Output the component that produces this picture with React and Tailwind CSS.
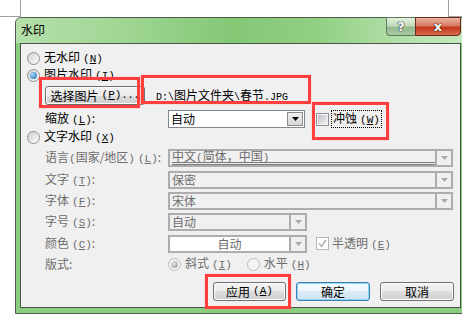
import React from 'react';

// small helpers for the Win7-style controls
function Acc({ k }) {
  return (
    <span className="ml-[3px] font-['Liberation_Mono',monospace] text-[11px]">
      (<span className="underline">{k}</span>)
    </span>
  );
}

function M({ children }) {
  return <span className="font-['Liberation_Mono',monospace] text-[10px]">{children}</span>;
}

function Radio({ checked, disabled }) {
  return (
    <span
      className={`flex h-[13px] w-[13px] shrink-0 items-center justify-center rounded-full border ${
        disabled ? 'border-[#bcbcbc] bg-[#f4f4f4]' : 'border-[#8e8f8f] bg-[linear-gradient(135deg,#cfcfcf,#fdfdfd)]'
      }`}
    >
      {checked && (
        <span
          className={`h-[7px] w-[7px] rounded-full ${
            disabled
              ? 'bg-[radial-gradient(circle_at_35%_35%,#e0e0e0,#9a9a9a)]'
              : 'bg-[radial-gradient(circle_at_35%_35%,#a6dcff,#1a5ea8)]'
          }`}
        />
      )}
    </span>
  );
}

function Check({ checked, disabled }) {
  return (
    <span
      className={`flex h-[13px] w-[13px] shrink-0 items-center justify-center border ${
        disabled ? 'border-[#b8b8b8] bg-white' : 'border-[#8e8f8f] bg-[linear-gradient(135deg,#b7bcc2,#f6f6f6)] shadow-[inset_0_0_0_1px_#f4f4f4]'
      }`}
    >
      {checked && (
        <svg width="9" height="9" viewBox="0 0 9 9">
          <path d="M1 4.5 L3.5 7.5 L8 1" fill="none" stroke="#b4b4b4" strokeWidth="1.6" />
        </svg>
      )}
    </span>
  );
}

function Arrow({ dark }) {
  return (
    <svg width="7" height="4" viewBox="0 0 7 4">
      <path d="M0 0h7L3.5 4z" fill={dark ? '#000' : '#a8a8a8'} />
    </svg>
  );
}

function Combo({ w, value, kind, center, underline }) {
  if (kind === 'enabled') {
    return (
      <div className={`flex h-[18px] ${w} items-center border border-[#828790] bg-white`}>
        <span className="flex-1 pl-[2px] text-black">{value}</span>
        <span className="mr-px flex h-[14px] w-[16px] items-center justify-center border border-[#8b8b8b] bg-[linear-gradient(#f0f0f0,#d6d6d6)]">
          <Arrow dark />
        </span>
      </div>
    );
  }
  return (
    <div
      className={`flex h-[18px] ${w} items-center border-2 border-[#adadad] ${
        kind === 'white' ? 'bg-white' : 'bg-[#f0f0f0]'
      }`}
    >
      <span className={`flex h-full flex-1 items-center text-[#6d6d6d] ${center ? 'justify-center' : 'pl-[2px]'}`}>
        {underline ? (
          <span className="flex h-full w-full items-center border-b-[3px] border-double border-[#7a7a7a] pt-px">{value}</span>
        ) : (
          value
        )}
      </span>
      <span className="flex h-full w-[16px] items-center justify-center border-l-2 border-[#adadad] bg-[#f0f0f0]">
        <Arrow />
      </span>
    </div>
  );
}

function Btn({ children, def, w }) {
  return (
    <div
      className={`flex h-[19px] ${w} items-center justify-center rounded-[3px] border text-black ${
        def
          ? 'border-[#3c7fb1] bg-[linear-gradient(#f6fbfe_0%,#eaf4fb_50%,#dcebf6_50%,#cfe3f2_100%)] shadow-[inset_0_0_0_1px_#8fd5f7]'
          : 'border-[#707070] bg-[linear-gradient(#f2f2f2_0%,#ebebeb_50%,#dddddd_50%,#cfcfcf_100%)] shadow-[inset_0_0_0_1px_#fbfbfb]'
      }`}
    >
      {children}
    </div>
  );
}

function Label({ children, gray }) {
  return <span className={`w-[123px] shrink-0 ${gray ? 'text-[#6d6d6d]' : 'text-black'}`}>{children}</span>;
}

export default function App() {
  return (
    <div className="relative h-[322px] w-[462px] overflow-hidden bg-white font-['Noto_Sans_CJK_SC',sans-serif] text-[12px] leading-none">
      {/* page crop marks behind the dialog */}
      <svg width="462" height="17" className="block">
        <path d="M0 16.5H20.5V0M448.5 0V16.5H462" fill="none" stroke="#a0a0a0" />
      </svg>

      {/* dialog window */}
      <div className="ml-[15px] flex h-[297px] w-[451px] flex-col rounded-t-[6px] border border-[#4d5a4c] bg-[#8bcd7e]">
        {/* title bar */}
        <div className="flex h-[25px] justify-between rounded-t-[5px] bg-[linear-gradient(90deg,#b4dfaa_0%,#a2d796_22%,#84c876_48%,#8fcf81_66%,#b7e1ae_88%,#c4e7bc_100%)]">
          <span className="ml-[5px] self-center pb-px text-black">水印</span>
          <div className="-mt-px mr-[4px] flex h-[19px]">
            <div className="flex w-[29px] items-center justify-center rounded-bl-[4px] border border-r-0 border-[#5e7a5a] bg-[linear-gradient(#e2f1de_0%,#c2dcbc_45%,#93b98d_55%,#a9cba3_100%)]">
              <span className="font-['DejaVu_Sans',sans-serif] text-[13px] font-bold text-white [text-shadow:0_0_1px_#223,0_0_1px_#223,0_0_1px_#223]">?</span>
            </div>
            <div className="flex w-[46px] items-center justify-center rounded-br-[4px] border border-[#6b2a1c] bg-[linear-gradient(#eab3a3_0%,#d77a62_45%,#c2391c_55%,#d8694d_100%)]">
              <span className="font-['DejaVu_Sans',sans-serif] text-[13px] font-bold text-white [text-shadow:0_0_1px_#311,0_0_1px_#311,0_0_1px_#311]">x</span>
            </div>
          </div>
        </div>

        {/* client area */}
        <div className="mx-[4px] mb-[5px] flex flex-1 flex-col border border-[#4a5549] bg-[#f0f0f0] text-black">
          <div className="mt-[7px] flex h-[14px] items-center gap-[4px] pl-[6px]">
            <Radio />
            <span>无水印<Acc k="N" /></span>
          </div>
          <div className="mt-[3px] flex h-[14px] items-center gap-[4px] pl-[6px]">
            <Radio checked />
            <span>图片水印<Acc k="I" /></span>
          </div>
          <div className="mt-[4px] flex h-[19px] items-center pl-[24px]">
            <Btn w="w-[100px]">
              选择图片<Acc k="P" />
              <M>...</M>
            </Btn>
            <span className="ml-[11px]">
              <M>D:\</M>图片文件夹<M>\</M>春节<M>.JPG</M>
            </span>
          </div>
          <div className="mt-[5px] flex h-[18px] items-center pl-[24px]">
            <Label>
              缩放<Acc k="L" />:
            </Label>
            <Combo w="w-[137px]" value="自动" kind="enabled" />
            <span className="ml-[11px]">
              <Check />
            </span>
            <span className="ml-[2px] border border-dotted border-black px-px py-px">
              冲蚀<Acc k="W" />
            </span>
          </div>
          <div className="mt-[2px] flex h-[14px] items-center gap-[4px] pl-[6px]">
            <Radio />
            <span>文字水印<Acc k="X" /></span>
          </div>
          <div className="mt-[5px] flex h-[18px] items-center pl-[24px]">
            <Label gray>
              语言<span className="font-['Liberation_Mono',monospace] text-[11px]">(</span>国家/地区
              <span className="font-['Liberation_Mono',monospace] text-[11px]">)</span>
              <Acc k="L" />:
            </Label>
            <Combo w="w-[285px]" value={<span>中文<span className="font-['Liberation_Mono',monospace] text-[11px]">(</span>简体，中国<span className="font-['Liberation_Mono',monospace] text-[11px]">)</span></span>} underline />
          </div>
          <div className="mt-[4px] flex h-[17px] items-center pl-[24px]">
            <Label gray>
              文字<Acc k="T" />:
            </Label>
            <Combo w="w-[285px]" value="保密" />
          </div>
          <div className="mt-[4px] flex h-[17px] items-center pl-[24px]">
            <Label gray>
              字体<Acc k="F" />:
            </Label>
            <Combo w="w-[285px]" value="宋体" />
          </div>
          <div className="mt-[4px] flex h-[17px] items-center pl-[24px]">
            <Label gray>
              字号<Acc k="S" />:
            </Label>
            <Combo w="w-[139px]" value="自动" />
          </div>
          <div className="mt-[5px] flex h-[17px] items-center pl-[24px]">
            <Label gray>
              颜色<Acc k="C" />:
            </Label>
            <Combo w="w-[139px]" value="自动" kind="white" center />
            <span className="ml-[9px]">
              <Check checked disabled />
            </span>
            <span className="ml-[3px] text-[#6d6d6d]">
              半透明<Acc k="E" />
            </span>
          </div>
          <div className="mt-[5px] flex h-[14px] items-center pl-[24px] text-[#6d6d6d]">
            <Label gray>版式:</Label>
            <Radio checked disabled />
            <span className="ml-[4px]">
              斜式<Acc k="I" />
            </span>
            <span className="ml-[15px]">
              <Radio disabled />
            </span>
            <span className="ml-[4px]">
              水平<Acc k="H" />
            </span>
          </div>
          <div className="mt-[11px] flex h-[19px] justify-end gap-[10px] pr-[6px]">
            <Btn w="w-[73px]">
              应用<Acc k="A" />
            </Btn>
            <Btn w="w-[74px]" def>
              确定
            </Btn>
            <Btn w="w-[74px]">取消</Btn>
          </div>
        </div>
      </div>

      {/* red annotation boxes drawn over the screenshot */}
      <div className="absolute left-[39px] top-[77px] h-[31px] w-[101px] border-[3px] border-[#ff3e3e] shadow-[0_0_1px_#ff9a9a]" />
      <div className="absolute left-[141px] top-[75px] h-[29px] w-[170px] border-[3px] border-[#ff3e3e] shadow-[0_0_1px_#ff9a9a]" />
      <div className="absolute left-[312px] top-[102px] h-[38px] w-[77px] border-[3px] border-[#ff3e3e] shadow-[0_0_1px_#ff9a9a]" />
      <div className="absolute left-[205px] top-[274px] h-[35px] w-[86px] border-[3px] border-[#ff3e3e] shadow-[0_0_1px_#ff9a9a]" />
    </div>
  );
}
